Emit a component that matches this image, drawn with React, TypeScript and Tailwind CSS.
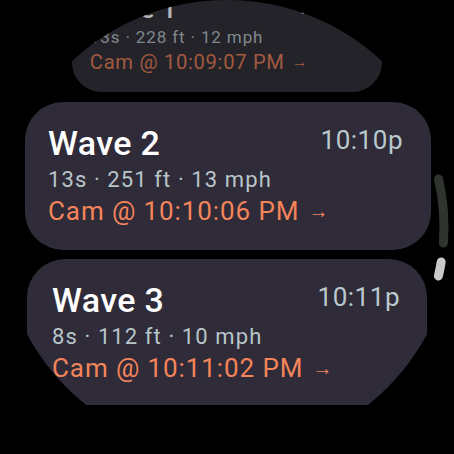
import clsx from 'clsx';

type Wave = {
  name: string;
  time: string;
  stats: string;
  cam: string;
};

const waves: Wave[] = [
  { name: 'Wave 1', time: '10:09p', stats: '13s · 228 ft · 12 mph', cam: 'Cam @ 10:09:07 PM' },
  { name: 'Wave 2', time: '10:10p', stats: '13s · 251 ft · 13 mph', cam: 'Cam @ 10:10:06 PM' },
  { name: 'Wave 3', time: '10:11p', stats: '8s · 112 ft · 10 mph', cam: 'Cam @ 10:11:02 PM' },
];

function WaveCard({ wave, dim, className }: { wave: Wave; dim?: boolean; className?: string }) {
  return (
    <div
      className={clsx(
        'shrink-0 rounded-[38px] pt-[21px]',
        dim ? 'bg-[#25232a]' : 'bg-[#2f2b38]',
        className
      )}
    >
      <div className="flex items-start justify-between">
        <span
          className={clsx(
            'text-[34px] leading-[40px] font-medium tracking-[0.01em]',
            dim ? 'text-[#b4b4b8]' : 'text-white'
          )}
        >
          {wave.name}
        </span>
        <span
          className={clsx(
            'text-[26px] leading-[35px] tracking-[0.02em]',
            dim ? 'text-[#858f93]' : 'text-[#b9c9cd]'
          )}
        >
          {wave.time}
        </span>
      </div>
      <div
        className={clsx(
          'text-[22px] leading-[34px] tracking-[0.05em]',
          dim ? 'text-[#7f898e]' : 'text-[#b8c6ca]'
        )}
      >
        {wave.stats}
      </div>
      <div
        className={clsx(
          'flex items-center text-[26px] leading-[28px] tracking-[0.035em]',
          dim ? 'text-[#a25a3e]' : 'text-[#f4845a]'
        )}
      >
        <span>{wave.cam}</span>
        <span className="ml-[9px] text-[20px]">→</span>
      </div>
    </div>
  );
}

export default function App() {
  return (
    <div className="relative w-[454px] h-[454px] bg-black overflow-hidden font-['Roboto','Noto_Sans',sans-serif]">
      {/* Round watch screen */}
      <div className="w-full h-full rounded-full overflow-hidden flex flex-col items-center">
        <WaveCard
          wave={waves[0]}
          dim
          className="w-[400px] h-[148px] -mt-[56px] origin-bottom scale-[0.775] pl-[23px] pr-[28px]"
        />
        <WaveCard wave={waves[1]} className="w-[406px] h-[148px] mt-[10px] ml-[2px] pl-[23px] pr-[28px]" />
        <WaveCard wave={waves[2]} className="w-[400px] h-[146px] mt-[9px] pl-[25px] pr-[27px]" />
      </div>

      {/* Position indicator */}
      <svg className="absolute inset-0 pointer-events-none" width="454" height="454" viewBox="0 0 454 454">
        <path d="M438.6 179 A217 217 0 0 1 443.4 243" fill="none" stroke="#30342f" strokeWidth="9" strokeLinecap="round" />
        <path d="M441.2 262 A217 217 0 0 1 438.4 276" fill="none" stroke="#c9c9c9" strokeWidth="9" strokeLinecap="round" />
      </svg>
    </div>
  );
}
